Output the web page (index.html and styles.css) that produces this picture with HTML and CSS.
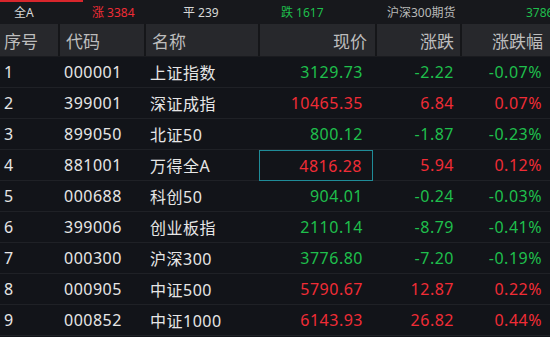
FILE: index.html
```html
<!DOCTYPE html>
<html lang="zh">
<head>
<meta charset="utf-8">
<link rel="stylesheet" href="styles.css">
</head>
<body>
<div class="app">
  <div class="topbar">
    <div class="tab-line"></div>
    <span class="stat s-all">全A</span>
    <span class="stat s-up up">涨 3384</span>
    <span class="stat s-flat">平 239</span>
    <span class="stat s-down down">跌 1617</span>
    <span class="stat s-fut">沪深300期货</span>
    <span class="stat s-futv down">3786.2</span>
  </div>
  <div class="row head">
    <div class="c c1">序号</div>
    <div class="c c2">代码</div>
    <div class="c c3">名称</div>
    <div class="c c4">现价</div>
    <div class="c c5">涨跌</div>
    <div class="c c6">涨跌幅</div>
  </div>
  <div class="row"><div class="c c1">1</div><div class="c c2">000001</div><div class="c c3">上证指数</div><div class="c c4 down">3129.73</div><div class="c c5 down">-2.22</div><div class="c c6 down">-0.07%</div></div>
  <div class="row"><div class="c c1">2</div><div class="c c2">399001</div><div class="c c3">深证成指</div><div class="c c4 up">10465.35</div><div class="c c5 up">6.84</div><div class="c c6 up">0.07%</div></div>
  <div class="row"><div class="c c1">3</div><div class="c c2">899050</div><div class="c c3">北证50</div><div class="c c4 down">800.12</div><div class="c c5 down">-1.87</div><div class="c c6 down">-0.23%</div></div>
  <div class="row"><div class="c c1">4</div><div class="c c2">881001</div><div class="c c3">万得全A</div><div class="c c4 up sel">4816.28</div><div class="c c5 up">5.94</div><div class="c c6 up">0.12%</div></div>
  <div class="row"><div class="c c1">5</div><div class="c c2">000688</div><div class="c c3">科创50</div><div class="c c4 down">904.01</div><div class="c c5 down">-0.24</div><div class="c c6 down">-0.03%</div></div>
  <div class="row"><div class="c c1">6</div><div class="c c2">399006</div><div class="c c3">创业板指</div><div class="c c4 down">2110.14</div><div class="c c5 down">-8.79</div><div class="c c6 down">-0.41%</div></div>
  <div class="row"><div class="c c1">7</div><div class="c c2">000300</div><div class="c c3">沪深300</div><div class="c c4 down">3776.80</div><div class="c c5 down">-7.20</div><div class="c c6 down">-0.19%</div></div>
  <div class="row"><div class="c c1">8</div><div class="c c2">000905</div><div class="c c3">中证500</div><div class="c c4 up">5790.67</div><div class="c c5 up">12.87</div><div class="c c6 up">0.22%</div></div>
  <div class="row"><div class="c c1">9</div><div class="c c2">000852</div><div class="c c3">中证1000</div><div class="c c4 up">6143.93</div><div class="c c5 up">26.82</div><div class="c c6 up">0.44%</div></div>
</div>
</body>
</html>
```
FILE: styles.css
```css
* { box-sizing: border-box; }
html, body { margin: 0; padding: 0; background: #121419; }
body { width: 550px; height: 337px; overflow: hidden; font-family: "Noto Sans", "Noto Sans CJK SC", sans-serif; }
.app { width: 550px; }
.topbar {
  position: relative;
  height: 24px;
  background: #17181c;
  display: flex;
  align-items: center;
  padding-left: 14px;
  font-size: 12px;
  color: #d8d8d8;
  white-space: nowrap;
  overflow: hidden;
}
.tab-line { position: absolute; left: 0; top: 0; width: 83px; height: 2px; background: #d8262c; }
.stat { display: block; flex: none; }
.s-all { width: 78px; }
.s-up { width: 91px; }
.s-flat { width: 98px; }
.s-down { width: 106px; }
.s-fut { width: 139px; color: #b8b8b8; }
.up { color: #f02c36; }
.down { color: #1fbf4c; }
.row {
  display: grid;
  grid-template-columns: 58px 86px 114px 117px 85px 90px;
  height: 31px;
  border-bottom: 1px solid #1f2126;
  font-size: 16px;
  color: #e6e6e6;
  letter-spacing: 0.5px;
}
.row.head {
  height: 33px;
  background: #27282c;
  color: #bdbdbd;
  font-size: 17px;
  letter-spacing: 0;
  border-bottom: 1px solid #1a1b1f;
}
.c { display: flex; align-items: center; white-space: nowrap; }
.head .c { border-left: 2px solid #151619; }
.head .c1 { border-left: none; }
.c1 { padding-left: 4px; }
.c2 { padding-left: 6px; }
.c3 { padding-left: 6px; }
.c4 { justify-content: flex-end; padding-right: 12px; }
.c5 { justify-content: flex-end; padding-right: 6px; }
.c6 { justify-content: flex-end; padding-right: 8px; }
.head .c4 { padding-right: 8px; }
.head .c5 { padding-right: 6px; }
.head .c6 { padding-right: 7px; }
.sel { margin: 0 2px -1px 1px; border: 1px solid #1f8c98; padding-right: 10px; }
```
